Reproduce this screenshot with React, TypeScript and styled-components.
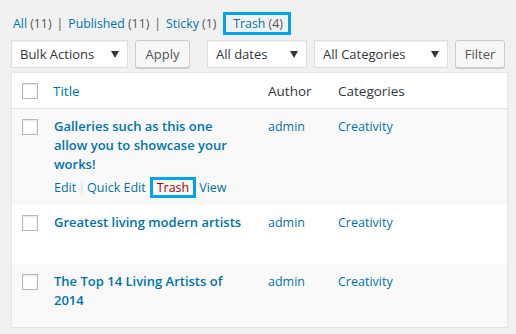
import React from "react";
import styled, { createGlobalStyle } from "styled-components";

const GlobalStyle = createGlobalStyle`
  body {
    margin: 0;
    background: #f1f1f1;
    font-family: "Open Sans", "Noto Sans", sans-serif;
    font-size: 13px;
    color: #32373c;
  }
`;

const posts = [
  { id: 1, title: "Galleries such as this one allow you to showcase your works!", actions: true, minHeight: 96 },
  { id: 2, title: "Greatest living modern artists", actions: false, minHeight: 59 },
  { id: 3, title: "The Top 14 Living Artists of 2014", actions: false, minHeight: 63 },
];

const Caret = () => (
  <svg width="8" height="7" viewBox="0 0 8 7">
    <path d="M0 0h8L4 7z" fill="#32373c" />
  </svg>
);

const App = () => {
  return (
    <>
      <GlobalStyle />
      <Page>
        <StatusLinks>
          <StatusLink>All <Count>(11)</Count></StatusLink>
          <Sep>|</Sep>
          <StatusLink>Published <Count>(11)</Count></StatusLink>
          <Sep>|</Sep>
          <StatusLink>Sticky <Count>(1)</Count></StatusLink>
          <Highlight $pad="0 5px 0 7px" $before={7} $after={0}>
            <StatusLink>Trash <Count>(4)</Count></StatusLink>
          </Highlight>
        </StatusLinks>

        <Toolbar>
          <Select $width={117}>Bulk Actions<Caret /></Select>
          <Button $width={55}>Apply</Button>
          <Spacer />
          <Select $width={100}>All dates<Caret /></Select>
          <Select $width={134}>All Categories<Caret /></Select>
          <Button $width={50}>Filter</Button>
        </Toolbar>

        <Table>
          <HeadRow>
            <CheckCell><Checkbox /></CheckCell>
            <TitleCell><HeadLink>Title</HeadLink></TitleCell>
            <AuthorCell>Author</AuthorCell>
            <CatCell>Categories</CatCell>
          </HeadRow>
          {posts.map((p, i) => (
            <Row key={p.id} $alt={i % 2 === 0} $minHeight={p.minHeight}>
              <CheckCell><Checkbox /></CheckCell>
              <TitleCell>
                <RowTitle>{p.title}</RowTitle>
                {p.actions && (
                  <RowActions>
                    <Action>Edit</Action>
                    <ActionSep>|</ActionSep>
                    <Action>Quick Edit</Action>
                    <Highlight $pad="0 4px" $before={4} $after={3}>
                      <Action $danger>Trash</Action>
                    </Highlight>
                    <Action>View</Action>
                  </RowActions>
                )}
              </TitleCell>
              <AuthorCell><CellLink>admin</CellLink></AuthorCell>
              <CatCell><CellLink>Creativity</CellLink></CatCell>
            </Row>
          ))}
        </Table>
      </Page>
    </>
  );
};

export default App;

const Page = styled.div`
  padding: 12px 8px 0 11px;
`;

const StatusLinks = styled.div`
  display: flex;
  align-items: center;
  height: 23px;
  padding-left: 2px;
  color: #555;
  font-size: 12.3px;
  white-space: nowrap;
`;

const StatusLink = styled.span`
  color: #0073aa;
`;

const Count = styled.span`
  color: #555;
`;

const Sep = styled.span`
  color: #555;
  margin: 0 5px;
`;

const Highlight = styled.span<{ $pad: string; $before: number; $after: number }>`
  display: inline-flex;
  align-items: center;
  align-self: stretch;
  border: 3px solid #00a3ee;
  padding: ${({ $pad }) => $pad};
  margin: 0 ${({ $after }) => $after}px 0 ${({ $before }) => $before}px;
  box-sizing: border-box;
`;

const Toolbar = styled.div`
  display: flex;
  align-items: center;
  gap: 7px;
  margin-top: 5px;
  height: 28px;
`;

const Spacer = styled.div`
  width: 3px;
`;

const Select = styled.div<{ $width: number }>`
  display: flex;
  align-items: center;
  justify-content: space-between;
  box-sizing: border-box;
  width: ${({ $width }) => $width}px;
  height: 28px;
  padding: 0 8px;
  background: #fff;
  border: 1px solid #ddd;
  box-shadow: inset 0 1px 2px rgba(0, 0, 0, 0.07);
  color: #32373c;
  font-size: 13px;
`;

const Button = styled.div<{ $width: number }>`
  display: flex;
  align-items: center;
  justify-content: center;
  box-sizing: border-box;
  width: ${({ $width }) => $width}px;
  height: 28px;
  background: #f7f7f7;
  border: 1px solid #ccc;
  border-radius: 3px;
  box-shadow: 0 1px 0 #ccc;
  color: #555;
  font-size: 13px;
`;

const Table = styled.div`
  margin-top: 4px;
  width: 497px;
  background: #fff;
  border: 1px solid #e5e5e5;
  box-shadow: 0 1px 1px rgba(0, 0, 0, 0.04);
  box-sizing: border-box;
`;

const HeadRow = styled.div`
  display: flex;
  height: 35px;
  align-items: center;
  border-bottom: 1px solid #e1e1e1;
  font-size: 13.5px;
  color: #32373c;
`;

const Row = styled.div<{ $alt: boolean; $minHeight: number }>`
  display: flex;
  align-items: flex-start;
  box-sizing: border-box;
  min-height: ${({ $minHeight }) => $minHeight}px;
  padding-top: 8px;
  background: ${({ $alt }) => ($alt ? "#f9f9f9" : "#fff")};
  font-size: 12.5px;
`;

const CheckCell = styled.div`
  width: 40px;
  flex: none;
  padding-left: 10px;
  box-sizing: border-box;
  display: flex;
  align-items: center;
  height: 20px;
`;

const TitleCell = styled.div`
  width: 216px;
  flex: none;
  padding: 0 10px 0 1px;
  box-sizing: border-box;
`;

const AuthorCell = styled.div`
  width: 70px;
  flex: none;
`;

const CatCell = styled.div`
  flex: 1;
`;

const Checkbox = styled.span`
  display: block;
  width: 16px;
  height: 16px;
  box-sizing: border-box;
  border: 1px solid #b4b9be;
  background: #fff;
  box-shadow: inset 0 1px 2px rgba(0, 0, 0, 0.1);
`;

const HeadLink = styled.span`
  color: #0073aa;
`;

const RowTitle = styled.div`
  max-width: 190px;
  color: #0073aa;
  font-weight: 600;
  font-size: 13px;
  line-height: 19px;
  padding-left: 1px;
`;

const RowActions = styled.div`
  display: flex;
  align-items: center;
  height: 21px;
  margin-top: 3px;
  padding-left: 1px;
  font-size: 12.5px;
  white-space: nowrap;
`;

const Action = styled.span<{ $danger?: boolean }>`
  color: ${({ $danger }) => ($danger ? "#a00" : "#0073aa")};
`;

const ActionSep = styled.span`
  color: #ddd;
  margin: 0 2px;
`;

const CellLink = styled.span`
  color: #0073aa;
  line-height: 19px;
`;
